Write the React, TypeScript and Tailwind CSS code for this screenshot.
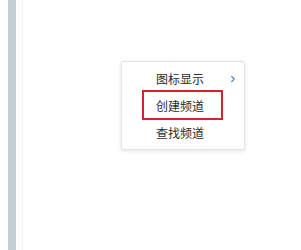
import { ChevronRight } from "lucide-react";

const items = ["图标显示", "创建频道", "查找频道"];

export default function App() {
  return (
    <div
      className="relative flex h-[250px] w-[301px] overflow-hidden bg-white"
      style={{ fontFamily: '"Microsoft YaHei", "Noto Sans CJK SC", sans-serif' }}
    >
      {/* sidebar edge */}
      <div className="ml-[8px] h-full w-[8px] bg-[#c3ced4]" />
      <div className="ml-[6px] h-full w-px bg-[#eef3f6]" />

      {/* context menu */}
      <div className="absolute left-[121px] top-[61px] w-[124px] rounded-[3px] border border-[#e3e3e3] bg-white py-[3px] shadow-[0_1px_4px_rgba(0,0,0,0.12)]">
        {items.map((label, i) => (
          <div
            key={label}
            className="relative flex h-[27px] items-center justify-center pr-[6px] text-[12px] text-[#2b2b2b]"
          >
            {label}
            {i === 0 && (
              <ChevronRight
                className="absolute right-[6px] top-1/2 h-[10px] w-[10px] -translate-y-1/2 text-[#5b86b5]"
                strokeWidth={3}
              />
            )}
            {i === 1 && (
              <div className="absolute left-[20px] top-[-2px] h-[30px] w-[81px] border-2 border-[#d0252d]" />
            )}
          </div>
        ))}
      </div>
    </div>
  );
}
